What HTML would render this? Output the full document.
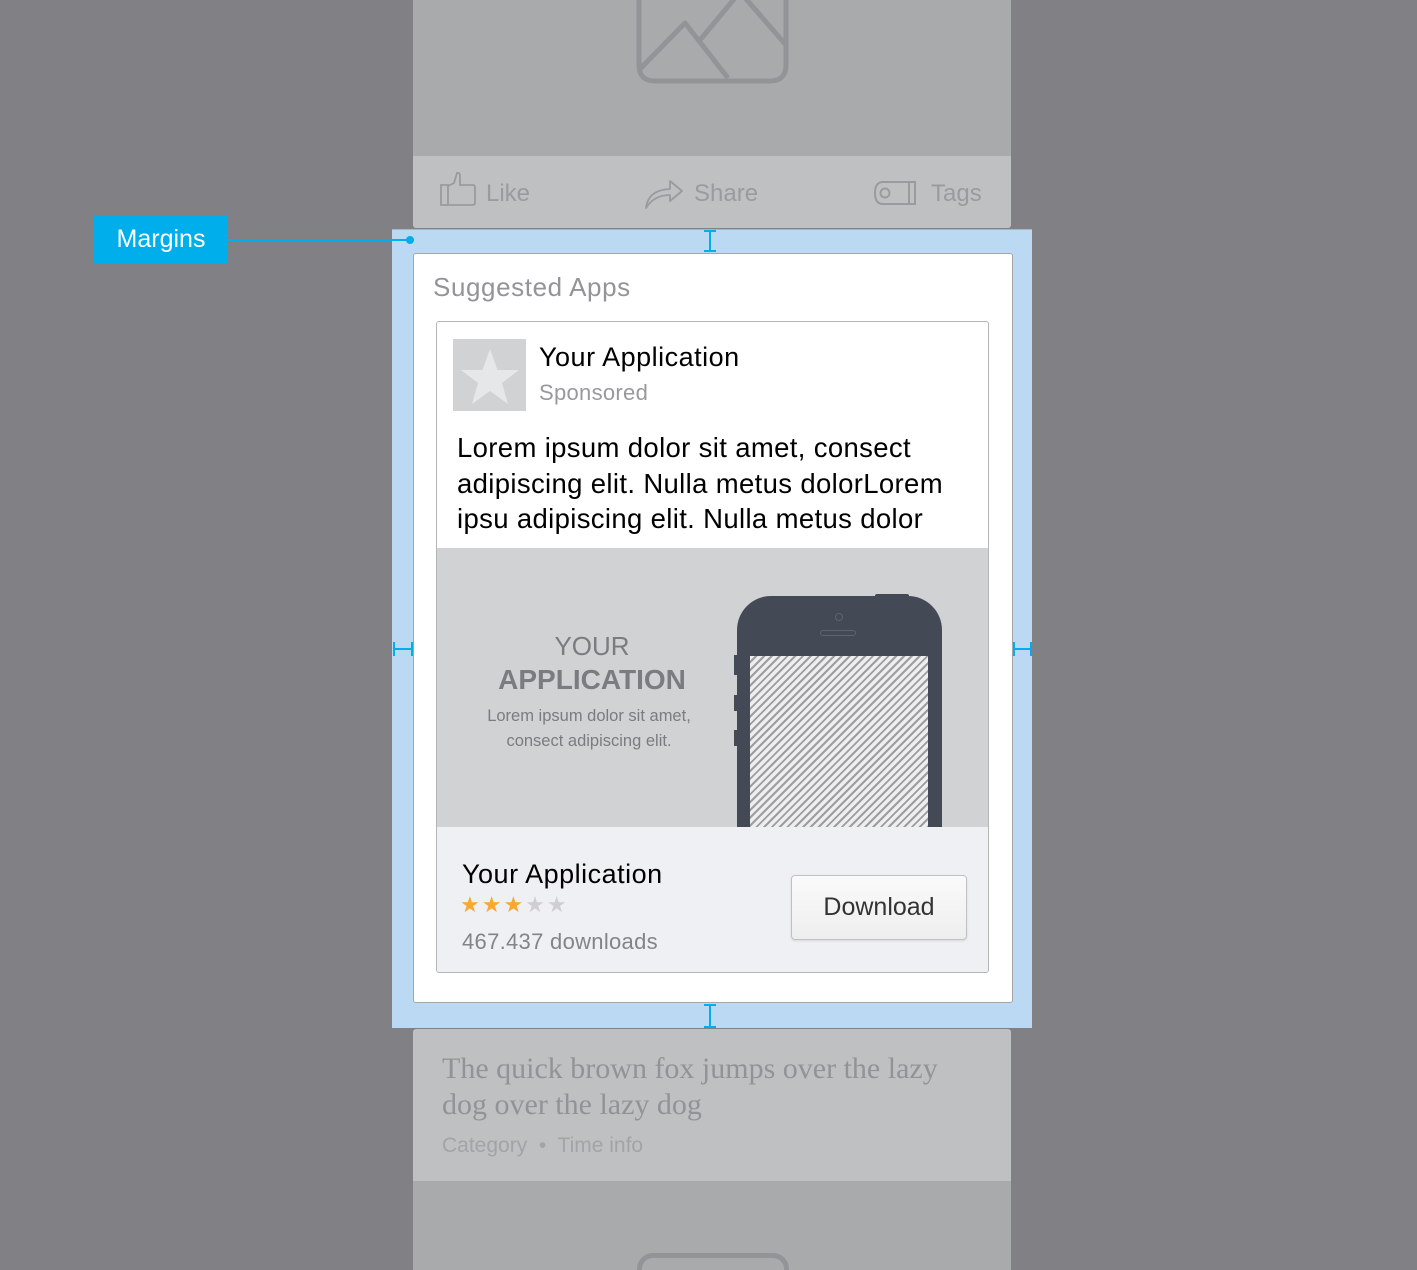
<!DOCTYPE html>
<html style="height:1270px;overflow:hidden"><head><meta charset="utf-8"><style>
*{margin:0;padding:0;box-sizing:border-box}
body{width:1417px;height:1270px;background:#808085;position:relative;overflow:hidden;font-family:"Liberation Sans","DejaVu Sans",sans-serif}
.a{position:absolute}
</style></head><body>
<div class="a" style="left:413px;top:0;width:598px;height:156px;background:#a9aaac"></div>
<svg class="a" style="left:630px;top:-10px" width="165" height="100" viewBox="0 0 165 100"><g fill="none" stroke="#939497" stroke-width="5" stroke-linejoin="round"><path d="M9 0 V75 Q9 91 25 91 H140 Q156 91 156 75 V0"/><path d="M9 80 L55 33 L98 88"/><path d="M70 50 L110 2 L156 55"/></g></svg>
<div class="a" style="left:413px;top:156px;width:598px;height:72px;background:#bfc0c2;border-radius:0 0 3px 3px"></div>
<svg class="a" style="left:440px;top:172px" width="36" height="36" viewBox="0 0 36 36"><path d="M1 13 H8 V33 H1 Z M8 14 L14 11 L17 1 Q20 0 20 4 V13 H33 Q35 13 35 16 V31 Q35 33 32 33 H8" fill="none" stroke="#9a9b9e" stroke-width="1.8"/></svg>
<div class="a" style="left:486px;top:180px;font-size:24px;color:#9a9b9e">Like</div>
<svg class="a" style="left:644px;top:176px" width="40" height="34" viewBox="0 0 40 34"><path d="M2 32 Q4 14 26 13 V5 L38 15 L26 25 V19 Q10 19 2 32 Z" fill="none" stroke="#9a9b9e" stroke-width="1.8" stroke-linejoin="round"/></svg>
<div class="a" style="left:694px;top:180px;font-size:24px;color:#9a9b9e">Share</div>
<svg class="a" style="left:873px;top:180px" width="46" height="26" viewBox="0 0 46 26"><path d="M10 2 H42 V24 H10 Q2 24 2 13 Q2 2 10 2 Z M36 2 V24" fill="none" stroke="#9a9b9e" stroke-width="2"/><circle cx="12" cy="13" r="4.5" fill="none" stroke="#9a9b9e" stroke-width="2"/></svg>
<div class="a" style="left:931px;top:180px;font-size:24px;color:#9a9b9e">Tags</div>

<div class="a" style="left:392px;top:229px;width:640px;height:799px;background:#bbd9f2;border-top:1px solid #9fb8cc"></div>
<div class="a" style="left:94px;top:215px;width:134px;height:49px;background:#00aeeb;color:#fff;font-size:25px;text-align:center;line-height:48px">Margins</div>
<div class="a" style="left:228px;top:239px;width:183px;height:2px;background:#00aeeb"></div>
<div class="a" style="left:406px;top:236px;width:8px;height:8px;border-radius:50%;background:#00aeeb"></div>
<div class="a" style="left:709px;top:230px;width:2px;height:22px;background:#00aeeb"></div>
<div class="a" style="left:704px;top:230px;width:12px;height:2px;background:#00aeeb"></div>
<div class="a" style="left:704px;top:250px;width:12px;height:2px;background:#00aeeb"></div>
<div class="a" style="left:709px;top:1004px;width:2px;height:24px;background:#00aeeb"></div>
<div class="a" style="left:704px;top:1004px;width:12px;height:2px;background:#00aeeb"></div>
<div class="a" style="left:704px;top:1026px;width:12px;height:2px;background:#00aeeb"></div>
<div class="a" style="left:393px;top:648px;width:20px;height:2px;background:#00aeeb"></div>
<div class="a" style="left:393px;top:642px;width:2px;height:14px;background:#00aeeb"></div>
<div class="a" style="left:411px;top:642px;width:2px;height:14px;background:#00aeeb"></div>
<div class="a" style="left:1013px;top:648px;width:19px;height:2px;background:#00aeeb"></div>
<div class="a" style="left:1013px;top:642px;width:2px;height:14px;background:#00aeeb"></div>
<div class="a" style="left:1030px;top:642px;width:2px;height:14px;background:#00aeeb"></div>

<div class="a" style="left:413px;top:253px;width:600px;height:750px;background:#fff;border:1px solid #a6a6a8;border-radius:3px"></div>
<div class="a" style="left:433px;top:272px;font-size:26px;letter-spacing:0.6px;color:#939498">Suggested Apps</div>
<div class="a" style="left:436px;top:321px;width:553px;height:652px;border:1px solid #b4b5b7;border-radius:3px;overflow:hidden;background:#fff">
 <div class="a" style="left:16px;top:17px;width:73px;height:72px;background:#d1d2d4"></div>
 <svg class="a" style="left:18px;top:24px" width="70" height="60" viewBox="0 0 70 60"><path d="M35 3 L42.5 24 L64 24 L47 37 L53 58 L35 45 L17 58 L23 37 L6 24 L27.5 24 Z" fill="#e6e7e9"/></svg>
 <div class="a" style="left:102px;top:20px;font-size:27px;letter-spacing:0.5px;color:#000">Your Application</div>
 <div class="a" style="left:102px;top:58px;font-size:22px;letter-spacing:0.3px;color:#98999c">Sponsored</div>
 <div class="a" style="left:20px;top:108px;font-size:27.5px;letter-spacing:0.35px;line-height:35.5px;color:#000;width:532px">Lorem ipsum dolor sit amet, consect adipiscing elit. Nulla metus dolorLorem ipsu adipiscing elit. Nulla metus dolor</div>
 <div class="a" style="left:0;top:226px;width:553px;height:279px;background:#d1d2d4"></div>
 <div class="a" style="left:0;top:309px;width:310px;text-align:center;font-size:26px;color:#7b7c7f">YOUR</div>
 <div class="a" style="left:0;top:342px;width:310px;text-align:center;font-size:28px;font-weight:bold;color:#7b7c7f">APPLICATION</div>
 <div class="a" style="left:0;top:382px;width:304px;text-align:center;font-size:16.5px;line-height:25px;color:#7b7c7f">Lorem ipsum dolor sit amet,<br>consect adipiscing elit.</div>
 <div class="a" style="left:438px;top:272px;width:34px;height:5px;background:#434a56;border-radius:2px"></div>
 <div class="a" style="left:297px;top:333px;width:6px;height:20px;background:#434a56"></div>
 <div class="a" style="left:297px;top:373px;width:6px;height:16px;background:#434a56"></div>
 <div class="a" style="left:297px;top:408px;width:6px;height:16px;background:#434a56"></div>
 <div class="a" style="left:300px;top:274px;width:205px;height:240px;background:#434a56;border-radius:34px 34px 0 0"></div>
 <div class="a" style="left:398px;top:291px;width:8px;height:8px;border-radius:50%;border:1px solid #5d6470"></div>
 <div class="a" style="left:383px;top:308px;width:36px;height:6px;border-radius:3px;border:1px solid #5d6470"></div>
 <div class="a" style="left:313px;top:334px;width:178px;height:172px;background:repeating-linear-gradient(-45deg,#9c9d9f 0 2px,#eeeeef 2px 5.5px)"></div>
 <div class="a" style="left:0;top:505px;width:553px;height:147px;background:#eff0f3"></div>
 <div class="a" style="left:25px;top:537px;font-size:27px;letter-spacing:0.5px;color:#000">Your Application</div>
 <div class="a" style="left:23px;top:570px;font-size:22px;letter-spacing:2px;color:#f8a730">★★★<span style="color:#cfcfd1">★★</span></div>
 <div class="a" style="left:25px;top:607px;font-size:22px;letter-spacing:0.3px;color:#838488">467.437 downloads</div>
 <div class="a" style="left:354px;top:553px;width:176px;height:65px;border:1px solid #c0c1c3;border-radius:4px;background:linear-gradient(#fafafa,#eeeeef);box-shadow:0 1px 2px rgba(0,0,0,.1);font-size:25px;color:#333;text-align:center;line-height:63px">Download</div>
</div>

<div class="a" style="left:413px;top:1029px;width:598px;height:152px;background:#bfc0c2;border-radius:3px 3px 0 0"></div>
<div class="a" style="left:442px;top:1051px;font-family:'Liberation Serif','DejaVu Serif',serif;font-size:30px;line-height:36px;color:#929396;width:530px">The quick brown fox jumps over the lazy dog over the lazy dog</div>
<div class="a" style="left:442px;top:1134px;font-size:21px;color:#a3a4a7">Category &nbsp;•&nbsp; Time info</div>
<div class="a" style="left:413px;top:1181px;width:598px;height:89px;background:#a9aaac;overflow:hidden">
 <div class="a" style="left:224px;top:72px;width:152px;height:40px;border:5px solid #939497;border-radius:16px"></div>
</div>
</body></html>
